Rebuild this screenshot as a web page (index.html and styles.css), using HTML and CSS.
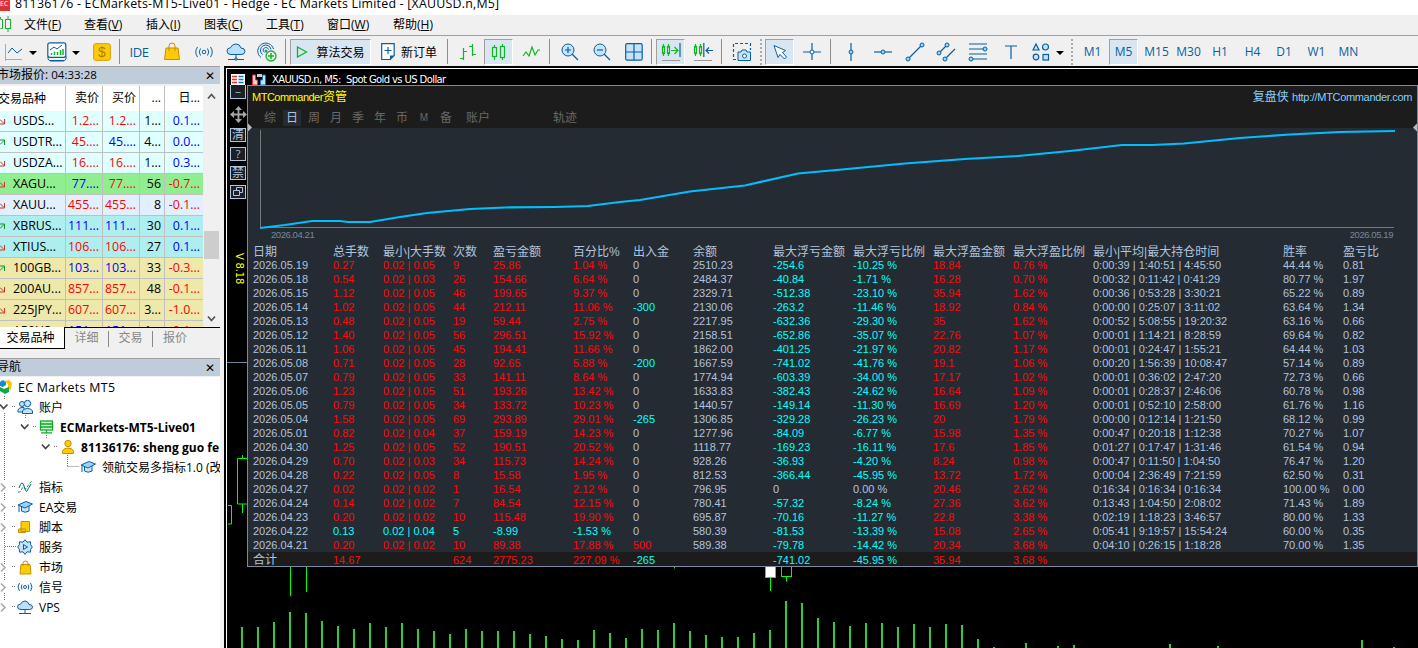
FILE: index.html
```
<!DOCTYPE html>
<html lang="zh-CN">
<head>
<meta charset="utf-8">
<title>EC Markets MT5</title>
<link rel="stylesheet" href="styles.css">
</head>
<body>
<div class="app">
  <header class="titlebar"><span class="logo">EC</span><span class="title">81136176 - ECMarkets-MT5-Live01 - Hedge - EC Markets Limited - [XAUUSD.n,M5]</span></header>
  <nav class="menu">
    <svg class="menu-ico" width="12" height="16" viewBox="0 0 12 16"><g fill="none" stroke="#12b428"><path d="M.5 3.500h2v9h-2M8 0v3M8 13v3M.5 1v2"/><rect x="5.500" y="3.500" width="5" height="9"/></g></svg>
    <span>文件(<u>F</u>)</span><span>查看(<u>V</u>)</span><span>插入(<u>I</u>)</span><span>图表(<u>C</u>)</span><span>工具(<u>T</u>)</span><span>窗口(<u>W</u>)</span><span>帮助(<u>H</u>)</span>
  </nav>
  <div class="toolbar">
    <svg width="24" height="20"><path d="M5.500 2v17M5 17.500h17" stroke="#aaa" fill="none"/><path d="M8 11l4-5 5 5 5-4" class="b"/></svg>
    <i class="caret"></i>
    <svg width="20" height="20"><rect x=".8" y=".8" width="18" height="14.500" rx="2" fill="#fff" class="b2"/><path d="M3 8l4-3 3 2 5-4M3 18.500h14" class="b"/><path d="M4.500 13v-2M7.500 13V9.500M10.500 13v-3M13.500 13V8M16 13V7" stroke="#12b428" stroke-width="1.500"/><path d="M1 14v3q1 2 3 2h12q2 0 3-2v-3" class="b"/></svg>
    <i class="caret start"></i>
    <svg width="18" height="18"><rect x=".7" y=".7" width="16.600" height="16.600" rx="2" fill="#ffcb05" stroke="#d79a00"/><text x="9" y="14" class="dollar">$</text></svg>
    <i class="sep"></i>
    <span class="ide">IDE</span>
    <svg width="16" height="19"><path d="M2 6h12l1.500 11.500h-15z" fill="#ffcb05" stroke="#c98d00"/><path d="M5 9V4q0-3 3-3t3 3v5" fill="none" stroke="#c98d00"/></svg>
    <svg width="20" height="16"><g class="b"><circle cx="10" cy="8" r="1.800"/><path d="M6.500 4.500q-2.500 3.500 0 7M13.500 4.500q2.500 3.500 0 7M3.500 3q-3.500 5 0 10M16.500 3q3.500 5 0 10"/></g></svg>
    <svg width="20" height="19"><path d="M5 12.500q-4 0-4-3.500 0-3 3.500-3.300Q6 2 10 2t5 4q4 0 4 3.500 0 3-4 3z" fill="#b9e0ff" class="f"/><path d="M10 13v3M2 17.500h16" class="b"/><circle cx="10" cy="17" r="1.200" fill="#b9e0ff" class="f"/></svg>
    <svg width="20" height="20"><g class="b"><path d="M4 15.500A8 8 0 1 1 16.500 7M5.500 12.500a5.300 5.300 0 1 1 8.500-5M7.500 10.500a2.700 2.700 0 1 1 4-3"/><circle cx="9" cy="9" r="1"/></g><circle cx="14" cy="14" r="5" fill="#f0f0f0" stroke="#12b428" stroke-width="1.300"/><path d="M14 11v6M11 14h6" stroke="#12b428" stroke-width="1.500"/></svg>
    <i class="sep"></i>
    <span class="btn algo"><svg width="12" height="12"><path d="M1.500 1l9 5-9 5z" fill="none" stroke="#12b428" stroke-width="1.300"/></svg>算法交易</span>
    <span class="order"><svg width="14" height="18"><path d="M.7.700h12.500v11.800l-4 4H.7z" fill="#fff" class="b2"/><path d="M9 17v-4.500h4z" fill="#0a5ea0"/><path d="M7 4v7M3.500 7.500h7" class="b2"/></svg>新订单</span>
    <i class="sep"></i>
    <svg width="18" height="18"><path d="M4.500 5v12M1 15.500h3M5 8.500h3M13.500 1v12M10 3.500h3M14 11.500h3" class="g"/></svg>
    <span class="btn"><svg width="16" height="18"><g class="g"><rect x="1.500" y="4.500" width="4" height="9"/><rect x="9.500" y="3.500" width="4" height="11"/><path d="M3.500 2v2M3.500 14v3M11.500 1v2M11.500 15v2"/></g></svg></span>
    <svg width="18" height="16"><path d="M1 12l3-4 3 4 3-9 3 8 3-5h2" class="g"/></svg>
    <i class="sep"></i>
    <svg width="18" height="18"><path d="M11 11l6 6" class="b2"/><circle cx="7" cy="7" r="6" fill="#c5e4fb" class="f"/><path d="M7 4v6M4 7h6" class="b2"/></svg>
    <svg width="18" height="18"><path d="M11 11l6 6" class="b2"/><circle cx="7" cy="7" r="6" fill="#c5e4fb" class="f"/><path d="M4 7h6" class="b2"/></svg>
    <svg width="18" height="18"><rect x=".7" y=".7" width="16.500" height="16.500" rx="1.500" fill="#c5e4fb" class="b2"/><path d="M9 1v16M1 9h16" class="b2"/></svg>
    <i class="sep"></i>
    <span class="btn"><svg width="20" height="20"><g class="g"><rect x="1.500" y="4.500" width="2" height="7"/><rect x="6.500" y="4.500" width="2" height="7"/><path d="M2.500 2v2M2.500 12v2M7.500 2v2M7.500 12v2M10 8.500h7M13.500 5l3.500 3.500-3.500 3.500"/></g><path d="M19 1v14" class="b2"/><path d="M1 18.500h18" stroke="#999"/></svg></span>
    <svg width="20" height="20"><g class="g"><rect x="1.500" y="4.500" width="2" height="7"/><rect x="6.500" y="4.500" width="2" height="7"/><path d="M2.500 2v2M2.500 12v2M7.500 2v2M7.500 12v2"/></g><path d="M10.800 1v14M13 8.500h7M16 5.500l-3 3 3 3" class="b2"/><path d="M1 18.500h18" stroke="#999"/></svg>
    <i class="sep"></i>
    <svg width="20" height="20"><path d="M4 17.500H1.500v-16h17V8" class="b2" stroke-dasharray="3 2"/><path d="M6 10h3l1-2h4l1 2h3.500v8.500H6z" fill="#c5e4fb" class="f"/><circle cx="12.500" cy="14" r="2" fill="#fff" class="f"/></svg>
    <i class="dots"></i>
    <span class="btn"><svg width="16" height="16"><path d="M2 1.500l11.500 5-3 2 4 4.500-2 2-4.500-4.500-2 3z" fill="#fff" class="f"/></svg></span>
    <svg width="20" height="20"><path d="M10 1v17M1 10h18" class="b2"/><circle cx="10" cy="10" r="2" fill="#fff" class="f"/></svg>
    <i class="sep"></i>
    <svg width="8" height="20"><path d="M4 1v18" class="b2"/><circle cx="4" cy="10" r="2" fill="#9bd3ff" class="f"/></svg>
    <svg width="20" height="8"><path d="M1 4h18" class="b2"/><circle cx="10" cy="4" r="2" fill="#9bd3ff" class="f"/></svg>
    <svg width="20" height="20"><path d="M3 17L17 3" class="b2"/><g fill="#9bd3ff" class="f"><circle cx="3" cy="17" r="2"/><circle cx="17" cy="3" r="2"/></g></svg>
    <svg width="20" height="20"><path d="M3 11l8-8M9 17L19 7" class="b2"/><g fill="#9bd3ff" class="f"><circle cx="3" cy="11" r="2"/><circle cx="11" cy="3" r="2"/><circle cx="9" cy="17" r="2"/></g></svg>
    <svg width="20" height="20"><path d="M1 2h18M1 7h15M1 12h18M4 17h15" class="b2"/><g fill="#9bd3ff" class="f"><circle cx="17" cy="7" r="2"/><circle cx="3" cy="17" r="2"/></g></svg>
    <svg width="14" height="16"><path d="M1 2h12M7 2v13" class="b2"/></svg>
    <svg width="18" height="18"><g fill="#c5e4fb" class="b2"><path d="M1 7l3-6 3 6z" fill="#c5e4fb"/><circle cx="13.500" cy="4" r="3"/><circle cx="4" cy="14" r="2.800"/><rect x="11" y="11.500" width="5.500" height="5.500"/></g></svg>
    <i class="caret start pad"></i>
    <i class="dots"></i>
    <span class="tf">M1</span><span class="btn tf">M5</span><span class="tf">M15</span><span class="tf">M30</span><span class="tf">H1</span><span class="tf">H4</span><span class="tf">D1</span><span class="tf">W1</span><span class="tf">MN</span>
  </div>

  <div class="workspace">
    <aside class="side">
      <div class="panel-head"><span>市场报价: <b class="clock">04:33:28</b></span><i class="close">✕</i></div>
      <div class="market">
        <div class="quotes" id="quotes">
          <div class="q head"><span>交易品种</span><span>卖价</span><span>买价</span><span>...</span><span>日...</span></div>
        </div>
        <div class="scroll"><svg width="9" height="7"><path d="M1 5.500l3.500-4 3.500 4" class="chev"/></svg><i class="thumb"></i><svg width="9" height="7"><path d="M1 1.500l3.500 4 3.500-4" class="chev"/></svg></div>
      </div>
      <div class="tabs"><span class="on">交易品种</span><span>详细</span><span>交易</span><span>报价</span></div>
      <div class="panel-head nav"><span>导航</span><i class="close">✕</i></div>
      <div class="tree">
        <svg class="guides" width="110" height="240"><g stroke="#777" stroke-dasharray="1 1" fill="none"><path d="M4.500 19v4M4.500 36v68M4.500 116v8M4.500 136v8M4.500 156v32M4.500 196v8M4.500 216v8M12 29.500h4M33 49.500h4M54 69.500h4M12 109.500h4M12 129.500h4M12 149.500h4M5 169.500h11M12 189.500h4M12 209.500h4M12 229.500h4M67.500 78v12M67.500 89.500h11M25.500 38v4M46.500 58v4"/></g>
        <g fill="none" stroke="#444" stroke-width="1.600"><path d="M0 27.500l3.500 4 4-4M21 47.500l3.500 4 4-4M42 67.500l3.500 4 4-4"/></g>
        <g fill="none" stroke="#aaa" stroke-width="1.600"><path d="M1 106.500l4 4-4 4M1 126.500l4 4-4 4M1 146.500l4 4-4 4M1 186.500l4 4-4 4M1 206.500l4 4-4 4M1 226.500l4 4-4 4"/></g></svg>
        <div class="n l0"><svg width="12" height="16"><path d="M0 3l3-2 3 2v3l-3 2-3-1z" fill="#1688d0"/><path d="M4 2l5-1 3 3-1 7-3-2V5z" fill="#ffc400"/><path d="M0 8l4 2 5-2v5l-4 2-5-3z" fill="#10a840"/></svg>EC Markets MT5</div>
        <div class="n l1"><svg width="16" height="16"><g fill="#c5e4fb" class="f"><circle cx="5" cy="5" r="2.500"/><path d="M1 13V11q1-2.500 4-2.500h2V13z"/><circle cx="10.500" cy="4.500" r="3.200"/><path d="M5.500 14.500V12q1-2.500 5-2.500t5 2.500v2.500z"/></g></svg>账户</div>
        <div class="n l2 bold"><svg width="15" height="14"><g fill="#c8f7ce" stroke="#12a828" stroke-width="1.300"><rect x="1.500" y="1" width="12" height="9"/><path d="M2 4h11M2 7h11M7.500 10v3M2 12.800h11"/></g></svg>ECMarkets-MT5-Live01</div>
        <div class="n l3 bold"><svg width="14" height="16"><g fill="#ffcb05" stroke="#c98d00"><circle cx="7" cy="4.500" r="3.200"/><path d="M1.500 14.500V12q1-3 5.500-3t5.500 3v2.500z"/></g></svg>81136176: sheng guo fe</div>
        <div class="n l4"><svg width="16" height="14"><path d="M4.500 6v5q3.500 2.500 7.500 0V6" fill="#c5e4fb" class="f"/><path d="M1 5l8-3.500L15.500 4 8 8z" fill="#9bd3ff" class="f"/><path d="M2 5.500V12" class="b"/></svg>领航交易多指标1.0 (改</div>
        <div class="n l1"><svg width="16" height="14"><path d="M1 12h2l3-5 3 2 3-5 3-3" stroke="#12b428" fill="none" stroke-dasharray="3 1.500"/><path d="M2 8q3-9 5-2t3 5 4-7" class="b"/></svg>指标</div>
        <div class="n l1"><svg width="16" height="14"><path d="M4.500 6v5q3.500 2.500 7.500 0V6" fill="#c5e4fb" class="f"/><path d="M1 5l8-3.500L15.500 4 8 8z" fill="#9bd3ff" class="f"/><path d="M2 5.500V12" class="b"/></svg>EA交易</div>
        <div class="n l1"><svg width="16" height="14"><path d="M4 1.500h8.500v10H4zM1.500 9h7v3.500h-7z" fill="#ffcb05" stroke="#c98d00"/></svg>脚本</div>
        <div class="n l1"><svg width="16" height="16"><path d="M8 .7l2 2.500 3.500-.4.200 3L15.300 8l-1.600 2.200-.2 3-3.500-.4-2 2.500-2-2.500-3.500.4-.2-3L.7 8l1.600-2.200.2-3 3.500.4z" fill="#c5e4fb" class="f"/><path d="M6.500 5.500l4 2.500-4 2.500z" class="b"/></svg>服务</div>
        <div class="n l1"><svg width="16" height="15"><path d="M4 4.500h9l1 9.500H3z" fill="#ffcb05" stroke="#c98d00"/><path d="M6 6V3q0-2 2.500-2T11 3v3" fill="none" stroke="#c98d00"/></svg>市场</div>
        <div class="n l1"><svg width="16" height="14"><g class="b"><circle cx="8" cy="7" r="1.500"/><path d="M5 4.500q-1.500 2.500 0 5M11 4.500q1.500 2.500 0 5M2.500 3q-3 4 0 8M13.500 3q3 4 0 8"/></g></svg>信号</div>
        <div class="n l1"><svg width="16" height="15"><path d="M4 9.500q-3.500 0-3.500-2.700T3.500 4.200Q5 1 8 1t4 3.500q3.500 0 3.500 2.500t-3 2.500z" fill="#b9e0ff" class="f"/><path d="M8 10v3M2 13.500h12" class="b"/></svg>VPS</div>
      </div>
    </aside>

    <main class="chart">
      <div class="chart-title">
        <svg width="40" height="12"><rect x="1" y="0" width="14" height="12" fill="#fff"/><path d="M2 2.500h5M2 5.500h5M2 8.500h5" stroke="#e03030" stroke-width="1.500"/><path d="M8.500 2.500h5M8.500 5.500h5M8.500 8.500h5" stroke="#1875c0" stroke-width="1.500"/><path d="M22.500 1v10h5V6h-2V1z" fill="#ffd0d0" stroke="#e03030"/><path d="M27 0h5v3h-5z" fill="#ccc"/><path d="M35.500 1v10h-5V6h2V1z" fill="#c5e4fb" stroke="#1875c0"/></svg>
        <span>XAUUSD.n, M5:&nbsp; Spot Gold vs US Dollar</span>
      </div>
      <div class="chart-body">
        <div class="rail">
          <i class="box">−</i>
          <svg width="17" height="17"><path d="M8.500 2v13M2 8.500h13" stroke="#a8a8a8" stroke-width="1.800"/><path d="M8.500 0L12 4H5zM8.500 17L12 13H5zM0 8.500L4 5v7zM17 8.500L13 5v7z" fill="#a8a8a8"/></svg>
          <i class="box cn">清</i><i class="box">?</i><i class="box cn">禁</i>
          <i class="box"><svg width="10" height="10"><path d="M3.500 3V.5h6v5H7M.5 3.500h6v5h-6z" fill="none" stroke="#b0c4de"/></svg></i>
          <span class="ver">V 8.18</span>
          <i class="level"></i>
        </div>
        <section class="stats">
          <div class="stats-head">
            <div class="row"><span class="brand"><em>MTCommander</em>资管</span><span class="site">复盘侠 <em>http://MTCommander.com</em></span></div>
            <div class="periods"><span>综</span><span class="on">日</span><span>周</span><span>月</span><span>季</span><span>年</span><span>币</span><span class="m">M</span><span>备</span><span class="wide">账户</span><span class="track">轨迹</span></div>
          </div>
          <svg class="curve" width="1169" height="102" viewBox="248 128 1169 102"><path d="M260.500 130v98M260 227.500h1134" stroke="#777" fill="none"/><path d="M248 123.500l4 4-4 4zM1417 123.500l-4 4 4 4z" fill="#bbb"/><polyline fill="none" stroke="#00bfff" stroke-width="2.200" points="260,228 285,225 312,221 340,221 348,222 370,222 400,217 427,213 470,209 505,207.500 555,207 588,206 620,202 640,200 690,191.500 745,185.500 798,173.500 842,169.500 905,163.500 965,159 1018,156 1070,151 1122,145 1152,145 1184,143.500 1240,138 1290,134.500 1340,132 1395,131"/></svg>
          <div class="dates"><span>2026.04.21</span><span>2026.05.19</span></div>
          <div class="grid" id="grid"></div>
        </section>
      </div>
      <svg class="candles" width="1190" height="193" viewBox="228 455 1190 193"><g fill="none" stroke="#0f0"><path d="M228 505.500h3.500v18.500H228M247 458.500h-9.500v45.500h9.500M242.500 455v3M242.500 504v9M290.500 567v29M306.500 567v25M674.500 567v1.500M770.500 578v13M786.500 577v4.500"/><rect x="765.500" y="562.500" width="10" height="15" fill="#fff"/><rect x="781.500" y="562.500" width="10" height="14"/></g><g id="volume" fill="#32cd32"></g></svg>
    </main>
  </div>
</div>
<script src="app.js"></script>
</body>
</html>
```

FILE: styles.css
```
* { box-sizing: border-box; }
body { margin: 0; background: #f0f0f0; font-family: "Open Sans", "Noto Sans CJK SC", sans-serif; font-size: 12px; color: #000; }
i, em { font-style: normal; }
svg { display: block; flex: none; }
.app { width: 1418px; height: 648px; overflow: hidden; display: flex; flex-direction: column; }
.b { fill: none; stroke: #0a5ea0; }
.b2 { stroke: #0a5ea0; stroke-width: 1.2; }
path.b2:not([fill]) { fill: none; }
.f { stroke: #0a5ea0; }
.g { fill: none; stroke: #12b428; stroke-width: 1.2; }
.dollar { font: 14px "Liberation Sans", sans-serif; fill: #b87a00; text-anchor: middle; }

.titlebar { height: 15px; flex: none; background: #fff; display: flex; overflow: hidden; }
.logo { width: 10px; height: 11px; background: #e03030; color: #fff; font-size: 7px; line-height: 8px; margin-right: 5px; overflow: hidden; }
.title { line-height: 16px; margin-top: -4px; font-size: 12.4px; letter-spacing: .22px; white-space: nowrap; }
.menu { height: 21px; flex: none; display: grid; grid-template-columns: 24px 60px 62px 58px 62px 61px 66px 60px; align-items: center; padding-bottom: 2px; border-bottom: 1px solid #a0a0a0; white-space: nowrap; }

.toolbar { height: 30px; flex: none; padding-top: 2px; display: grid; align-items: center; justify-items: center; grid-template-rows: 27px;
  grid-template-columns: 24px 17px 31px 12px 35px 1px 38px 27px 37px 27px 36px 5px 81px 76px 4px 33px 29px 36px 4px 33px 31px 34px 5px 29px 36px 5px 31px 8px 29px 36px 5px 32px 31px 33px 30px 33px 33px 27px 14px 8px 33px 29px 37px 27px 36px 29px 34px 31px 33px; }
.caret { border: 4px solid transparent; border-top: 4px solid #000; border-bottom: 0; margin-top: 2px; }
.caret.start { justify-self: start; }
.caret.pad { margin-left: 2px; }
.sep { width: 1px; height: 25px; background: #8c8c8c; justify-self: start; }
.dots { height: 26px; border-left: 2px dotted #aaa; }
.btn { width: 100%; height: 26px; background: #d8e6f2; border: 1px solid #a0a0a0; border-right-color: #fff; border-bottom-color: #fff; display: flex; align-items: center; justify-content: center; }
.algo, .order { white-space: nowrap; }
.algo svg { margin-right: 8px; }
.order { display: flex; align-items: center; }
.order svg { margin-right: 6px; }
.ide, .tf { color: #0a5ea0; }
.ide { font-size: 13px; letter-spacing: -.4px; }

.workspace { flex: 1; min-height: 0; display: flex; }
.side { width: 220px; flex: none; display: flex; flex-direction: column; overflow: hidden; }
.panel-head { height: 18px; flex: none; background: #bfcddb; border-top: 1px solid #a0a0a0; display: flex; justify-content: space-between; align-items: center; margin-bottom: 2px; line-height: 14px; }
.panel-head.nav { margin-bottom: 1px; }
.panel-head span { margin-left: -3px; margin-top: -2px; white-space: nowrap; }
.clock { font-weight: 400; font-size: 11.500px; }
.close { width: 20px; text-align: center; font: 12px "DejaVu Sans", sans-serif; }
.market { height: 241px; flex: none; display: flex; overflow: hidden; }
.quotes { width: 203px; }
.q { display: grid; grid-template-columns: 66px 37px 37px 25px 38px; height: 21px; line-height: 20px; font-size: 12.4px; }
.q span { border-right: 1px solid #c0c0c0; border-bottom: 1px solid #c0c0c0; text-align: right; padding-right: 3px; white-space: nowrap; overflow: hidden; }
.q span:first-child { text-align: left; padding: 0; display: flex; align-items: center; gap: 8px; }
.q span:last-child { border-right: 0; }
.q.head { height: 25px; line-height: 24px; background: #fff; font-size: 12px; }
.q.head span { border-bottom: 0; }
.q.head span:first-child { text-indent: -2px; }
.red { color: #f00; }
.blue { color: #00f; }
.scroll { width: 17px; display: flex; flex-direction: column; justify-content: space-between; align-items: center; padding: 7px 0 5px; }
.thumb { width: 15px; height: 28px; background: #cdcdcd; margin-top: 120px; margin-bottom: 45px; }
.chev { fill: none; stroke: #555; stroke-width: 1.800; }
.tabs { height: 22px; flex: none; border-top: 1px solid #000; display: flex; color: #888; margin-bottom: 9px; }
.tabs span { width: 44px; height: 16px; margin-top: 3px; line-height: 14px; text-align: center; border-right: 1px solid #888; }
.tabs span:last-child { border: 0; }
.tabs .on { width: 65px; height: 22px; margin-top: -1px; line-height: 21px; padding-right: 3px; background: #fff; color: #000; border-right: 1px solid #000; border-bottom: 1px solid #000; }
.tree { position: relative; flex: 1; background: #fff; overflow: hidden; }
.guides { position: absolute; left: 0; top: 0; }
.n { height: 20px; display: flex; align-items: center; white-space: nowrap; }
.n svg:not(.guides) { margin-right: 6px; }
.l0 { font-size: 12.400px; letter-spacing: .3px; }
.l1 { margin-left: 17px; }
.l2 { margin-left: 39px; }
.l3 { margin-left: 61px; }
.l4 { margin-left: 80px; }
.bold { font-weight: 700; letter-spacing: .05px; }

.chart { flex: 1; margin-left: 4px; background: #000; padding: 2px 0 0 2px; position: relative; overflow: hidden; }
.chart::before { content: ""; position: absolute; inset: 2px 0 0 2px; border-left: 1px solid #fff; border-top: 1px solid #fff; }
.chart-title { height: 17px; padding: 6px 0 0 4px; display: flex; align-items: center; color: #fff; font: 10px "DejaVu Sans", sans-serif; letter-spacing: -.6px; gap: 2px; }
.chart-title span { white-space: pre; }
.chart-body { display: flex; position: relative; z-index: 1; }
.rail { width: 21px; flex: none; padding-left: 4px; display: flex; flex-direction: column; align-items: flex-start; }
.box { width: 16px; height: 14px; margin: 5px 0 0; background: #1c1f26; border: 1px solid #b0c4de; color: #b0c4de; display: flex; align-items: center; justify-content: center; font-size: 11px; line-height: 10px; overflow: hidden; }
.box:first-child { margin: 0 0 7px; border-top: 0; }
.box.cn { font-size: 12px; }
.ver { writing-mode: vertical-rl; color: #ff0; font: 10px "DejaVu Sans", sans-serif; letter-spacing: -.2px; margin: 54px 0 0 4px; height: 31px; white-space: nowrap; }
.level { width: 20px; margin: 78px 0 0 -3px; height: 1px; background: #778899; }
.stats { width: 1171px; height: 482px; background: #252b33; border: 1px solid #778ba5; display: flex; flex-direction: column; flex: none; }
.stats-head { background: #1c1c1c; height: 42px; flex: none; }
.row { height: 20px; display: flex; justify-content: space-between; align-items: center; padding: 0 5px 2px 4px; }
.brand, .site { font: 12px "Liberation Sans", "Noto Sans CJK SC", sans-serif; }
.brand { color: #ff0; }
.site { color: #87cefa; }
.brand em { font-size: 11px; letter-spacing: -.5px; }
.site em { font-size: 11px; letter-spacing: -.33px; }
.periods { display: flex; color: #696969; margin-left: 13px; height: 24px; align-items: center; }
.periods span { width: 18px; height: 16px; line-height: 16px; text-align: center; margin-right: 4px; }
.periods .on { background: #252b33; color: #b0c4de; }
.periods .m { font: 10px/16px "Liberation Sans", sans-serif; }
.periods .wide { width: 26px; margin: 0 60px 0 6px; }
.periods .track { width: 28px; }
.curve { flex: none; overflow: visible; }
.dates { display: flex; justify-content: space-between; padding: 0 24px 0 23px; color: #778899; font: 9.500px/10px "Liberation Sans", sans-serif; letter-spacing: -.43px; height: 14px; flex: none; }
.grid { flex: none; }
.r { display: grid; grid-template-columns: 80px 50px 70px 40px 80px 60px 60px 80px 80px 80px 80px 80px 190px 60px 60px; height: 14px; line-height: 14px; padding-left: 5px; color: #b0c4de; font-family: "Liberation Sans", "Noto Sans CJK SC", sans-serif; font-size: 11px; white-space: nowrap; }
.r.head { font-size: 12px; line-height: 16px; }
.r.total { background: #1c1c1c; line-height: 16px; overflow: hidden; }
.r.total span:first-child { font-size: 12px; }
.r .loss { color: #0ff; }
.r .gain { color: #fc0a0a; }
.candles { position: absolute; left: 4px; bottom: 0; }
```

FILE: app.js
```
const quotes = [
  ['USDS...', '1.2...', '1.2...', '1...', '0.1...', 'd', 'rr', '#e0ffff'],
  ['USDTR...', '45....', '45....', '4...', '0.0...', 'u', 'rb', '#e0ffff'],
  ['USDZA...', '16....', '16....', '1...', '0.3...', 'd', 'rr', '#e0ffff'],
  ['XAGU...', '77....', '77....', '56', '-0.7...', 'd', 'br', '#90ee90'],
  ['XAUU...', '455...', '455...', '8', '-0.1...', 'd', 'rr', '#e1efff'],
  ['XBRUS...', '111...', '111...', '30', '0.1...', 'u', 'bb', '#afeeee'],
  ['XTIUS...', '106...', '106...', '27', '0.1...', 'd', 'rr', '#afeeee'],
  ['100GB...', '103...', '103...', '33', '-0.3...', 'u', 'bb', '#eee8aa'],
  ['200AU...', '857...', '857...', '48', '-0.1...', 'd', 'rr', '#eee8aa'],
  ['225JPY...', '607...', '607...', '3...', '-1.0...', 'd', 'rr', '#eee8aa'],
  ['A50US...', '151...', '151...', '1...', '-0.1...', 'u', 'bb', '#eee8aa']
];
const tone = c => (c === 'r' ? 'red' : 'blue');
const arrows = {
  d: '<svg width="5" height="7"><path d="M0 1.500l4 4M4.500 1v5H0" fill="none" stroke="#d03030"/></svg>',
  u: '<svg width="5" height="7"><path d="M0 5.500l4-4M0 1h4.500v5" fill="none" stroke="#109030"/></svg>'
};
document.getElementById('quotes').insertAdjacentHTML('beforeend', quotes.map(q =>
  `<div class="q" style="background:${q[7]}"><span>${arrows[q[5]]}${q[0]}</span><span class="${tone(q[6][0])}">${q[1]}</span><span class="${tone(q[6][1])}">${q[2]}</span><span>${q[3]}</span><span class="${q[4][0] === '-' ? 'red' : 'blue'}">${q[4]}</span></div>`
).join(''));

const head = '日期,总手数,最小|大手数,次数,盈亏金额,百分比%,出入金,余额,最大浮亏金额,最大浮亏比例,最大浮盈金额,最大浮盈比例,最小|平均|最大持仓时间,胜率,盈亏比'.split(',');
const rows = `2026.05.19,0.27,0.02 | 0.05,9,25.86,1.04 %,0,2510.23,-254.6,-10.25 %,18.84,0.76 %,0:00:39 | 1:40:51 | 4:45:50,44.44 %,0.81
2026.05.18,0.54,0.02 | 0.03,26,154.66,6.64 %,0,2484.37,-40.84,-1.71 %,16.28,0.70 %,0:00:32 | 0:11:42 | 0:41:29,80.77 %,1.97
2026.05.15,1.12,0.02 | 0.05,46,199.65,9.37 %,0,2329.71,-512.38,-23.10 %,35.94,1.62 %,0:00:36 | 0:53:28 | 3:30:21,65.22 %,0.89
2026.05.14,1.02,0.02 | 0.05,44,212.11,11.06 %,-300,2130.06,-263.2,-11.46 %,18.92,0.84 %,0:00:00 | 0:25:07 | 3:11:02,63.64 %,1.34
2026.05.13,0.48,0.02 | 0.05,19,59.44,2.75 %,0,2217.95,-632.36,-29.30 %,35,1.62 %,0:00:52 | 5:08:55 | 19:20:32,63.16 %,0.66
2026.05.12,1.40,0.02 | 0.05,56,296.51,15.92 %,0,2158.51,-652.86,-35.07 %,22.76,1.07 %,0:00:01 | 1:14:21 | 8:28:59,69.64 %,0.82
2026.05.11,1.06,0.02 | 0.05,45,194.41,11.66 %,0,1862.00,-401.25,-21.97 %,20.82,1.17 %,0:00:01 | 0:24:47 | 1:55:21,64.44 %,1.03
2026.05.08,0.71,0.02 | 0.05,28,92.65,5.88 %,-200,1667.59,-741.02,-41.76 %,19.1,1.06 %,0:00:20 | 1:56:39 | 10:08:47,57.14 %,0.89
2026.05.07,0.79,0.02 | 0.05,33,141.11,8.64 %,0,1774.94,-603.39,-34.00 %,17.17,1.02 %,0:00:01 | 0:36:02 | 2:47:20,72.73 %,0.66
2026.05.06,1.23,0.02 | 0.05,51,193.26,13.42 %,0,1633.83,-382.43,-24.62 %,16.64,1.09 %,0:00:01 | 0:28:37 | 2:46:06,60.78 %,0.98
2026.05.05,0.79,0.02 | 0.05,34,133.72,10.23 %,0,1440.57,-149.14,-11.30 %,16.69,1.20 %,0:00:01 | 0:52:10 | 2:58:00,61.76 %,1.16
2026.05.04,1.58,0.02 | 0.05,69,293.89,29.01 %,-265,1306.85,-329.28,-26.23 %,20,1.79 %,0:00:00 | 0:12:14 | 1:21:50,68.12 %,0.99
2026.05.01,0.82,0.02 | 0.04,37,159.19,14.23 %,0,1277.96,-84.09,-6.77 %,15.98,1.35 %,0:00:47 | 0:20:18 | 1:12:38,70.27 %,1.07
2026.04.30,1.25,0.02 | 0.05,52,190.51,20.52 %,0,1118.77,-169.23,-16.11 %,17.6,1.85 %,0:01:27 | 0:17:47 | 1:31:46,61.54 %,0.94
2026.04.29,0.70,0.02 | 0.03,34,115.73,14.24 %,0,928.26,-36.93,-4.20 %,8.24,0.98 %,0:00:47 | 0:11:50 | 1:04:50,76.47 %,1.20
2026.04.28,0.22,0.02 | 0.05,8,15.58,1.95 %,0,812.53,-366.44,-45.95 %,13.72,1.72 %,0:00:04 | 2:36:49 | 7:21:59,62.50 %,0.31
2026.04.27,0.02,0.02 | 0.02,1,16.54,2.12 %,0,796.95,0,0.00 %,20.46,2.62 %,0:16:34 | 0:16:34 | 0:16:34,100.00 %,0.00
2026.04.24,0.14,0.02 | 0.02,7,84.54,12.15 %,0,780.41,-57.32,-8.24 %,27.36,3.62 %,0:13:43 | 1:04:50 | 2:08:02,71.43 %,1.89
2026.04.23,0.20,0.02 | 0.02,10,115.48,19.90 %,0,695.87,-70.16,-11.27 %,22.8,3.38 %,0:02:19 | 1:18:23 | 3:46:57,80.00 %,1.33
2026.04.22,0.13,0.02 | 0.04,5,-8.99,-1.53 %,0,580.39,-81.53,-13.39 %,15.08,2.65 %,0:05:41 | 9:19:57 | 15:54:24,60.00 %,0.35
2026.04.21,0.20,0.02 | 0.02,10,89.38,17.88 %,500,589.38,-79.78,-14.42 %,20.34,3.68 %,0:04:10 | 0:26:15 | 1:18:28,70.00 %,1.35
合计,14.67,,624,2775.23,227.09 %,-265,,-741.02,-45.95 %,35.94,3.68 %,,,`.split('\n').map(l => l.split(','));

function cls(r, i) {
  if (i >= 1 && i <= 5) return r[4][0] === '-' ? 'loss' : 'gain';
  if (r[i][0] === '-') return 'loss';
  if (i === 10 || i === 11 || (i === 6 && r[i] !== '0')) return 'gain';
  return '';
}
document.getElementById('grid').innerHTML =
  `<div class="r head">${head.map(h => `<span>${h}</span>`).join('')}</div>` +
  rows.map(r => `<div class="r${r[0] === '合计' ? ' total' : ''}">${r.map((v, i) => `<span class="${cls(r, i)}">${v}</span>`).join('')}</div>`).join('');

const volume = [21, 21, 26, 36, 35, 27, 22, 19, 25, 21, 25, 19, 17, 14, 19, 17, 17, 17, 14, 12, 9, 8, 18, 15, 10, 19, 18, 25, 17, 13, 11, 11, 15, 18, 47, 45, 30,
  26, 22, 25, 25, 21, 24, 21, 24, 23, 9, 1, 0, 5, 0, 2, 3, 0, 0, 0, 0, 0, 4, 0, 0, 2, 0, 0, 0, 0, 0, 0, 0, 0, 8, 0, 1];
document.getElementById('volume').innerHTML = volume.map((h, i) => h ? `<rect x="${241 + 16 * i}" y="${648 - h}" width="2" height="${h}"/>` : '').join('');
```
